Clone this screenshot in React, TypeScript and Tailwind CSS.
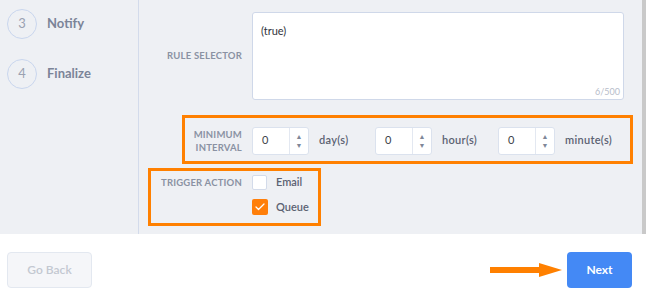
import { Check } from "lucide-react";

const font = { fontFamily: "Lato, 'Noto Sans', sans-serif" };

function Step({ n, label }: { n: number; label: string }) {
  return (
    <div className="flex h-[30px] items-center">
      <div className="flex h-[30px] w-[30px] items-center justify-center rounded-full border border-[#c9d6ee] text-[13px] text-[#9aa1b1]">
        {n}
      </div>
      <span className="ml-[10px] text-[13px] font-bold text-[#7b8498]">{label}</span>
    </div>
  );
}

function NumberBox() {
  return (
    <div className="flex h-[28px] w-[57px] rounded-[3px] border border-[#dbe2ee] bg-white">
      <div className="flex flex-1 items-center pl-[9px] text-[11px] text-[#3b3f48]">0</div>
      <div className="flex w-[19px] flex-col items-center justify-center border-l border-[#e3e8f1] text-[7px] leading-[9px] text-[#7f8798]">
        <span>▲</span>
        <span>▼</span>
      </div>
    </div>
  );
}

function Interval({ unit }: { unit: string }) {
  return (
    <div className="flex w-[123px] items-center">
      <NumberBox />
      <span className="ml-[10px] text-[11px] font-semibold tracking-[0.3px] text-[#5b6272]">{unit}</span>
    </div>
  );
}

export default function App() {
  return (
    <div style={font} className="flex h-[292px] w-[646px] flex-col overflow-hidden bg-white">
      <div className="flex h-[234px] bg-[#eef0f4]">
        <aside className="flex w-[139px] flex-col gap-[20px] border-r border-[#d3dbeb] pl-[7px] pt-[9px]">
          <Step n={3} label="Notify" />
          <Step n={4} label="Finalize" />
        </aside>

        <main className="flex flex-1 flex-col pt-[12px]">
          <div className="flex items-center">
            <div className="w-[103px] text-right text-[9.5px] font-bold tracking-[0.2px] text-[#8a92a3]">
              RULE SELECTOR
            </div>
            <div className="ml-[10px] flex h-[88px] w-[372px] flex-col rounded-[3px] border border-[#cfd8e9] bg-white pl-[8px] pr-[3px] pt-[10px]">
              <span className="text-[11px] text-[#2f333b]">(true)</span>
              <span className="mt-auto mb-[1px] self-end text-[9px] text-[#b7bdca]">6/500</span>
            </div>
          </div>

          <div className="ml-[43px] mt-[15px] flex h-[49px] w-[451px] items-center border-[3px] border-[#ff8000] pt-[2px]">
            <div className="w-[57px] text-right text-[9.5px] font-bold leading-[13px] tracking-[0.2px] text-[#8a92a3]">
              MINIMUM
              <br />
              INTERVAL
            </div>
            <div className="ml-[10px] flex">
              <Interval unit="day(s)" />
              <Interval unit="hour(s)" />
              <Interval unit="minute(s)" />
            </div>
          </div>

          <div className="ml-[9px] mt-[4px] flex h-[58px] w-[173px] border-[3px] border-[#ff8000] pt-[3px]">
            <div className="w-[91px] pt-[2px] text-right text-[9.5px] font-bold tracking-[0.2px] text-[#8a92a3]">
              TRIGGER ACTION
            </div>
            <div className="ml-[10px] flex flex-col gap-[8px]">
              <label className="flex items-center">
                <span className="h-[15px] w-[15px] rounded-[2px] border border-[#d3dbea] bg-white" />
                <span className="ml-[9px] text-[11px] font-semibold text-[#5b6272]">Email</span>
              </label>
              <label className="flex items-center">
                <span className="flex h-[16px] w-[16px] items-center justify-center rounded-[2px] bg-[#ff7f0a]">
                  <Check size={12} strokeWidth={2.5} className="text-white" />
                </span>
                <span className="ml-[8px] text-[11px] font-semibold text-[#5b6272]">Queue</span>
              </label>
            </div>
          </div>
        </main>

        <div className="w-[4px] bg-[#c9c9c9]" />
      </div>

      <footer className="flex flex-1 items-start pl-[7px] pr-[14px] pt-[18px]">
        <button className="h-[36px] w-[85px] rounded-[4px] border border-[#e3e8f0] bg-[#f5f6f9] text-[12px] font-semibold text-[#c3c8d1]">
          Go Back
        </button>
        <div className="ml-auto flex h-[36px] items-center">
          <svg width="72" height="16" viewBox="0 0 72 16" className="mr-[5px]">
            <rect x="0" y="5" width="50" height="6" fill="#ff8000" />
            <polygon points="49,1 72,8 49,15" fill="#ff8000" />
          </svg>
          <button className="h-[36px] w-[65px] rounded-[4px] bg-[#4489f5] text-[12px] font-bold text-white">
            Next
          </button>
        </div>
      </footer>
    </div>
  );
}
